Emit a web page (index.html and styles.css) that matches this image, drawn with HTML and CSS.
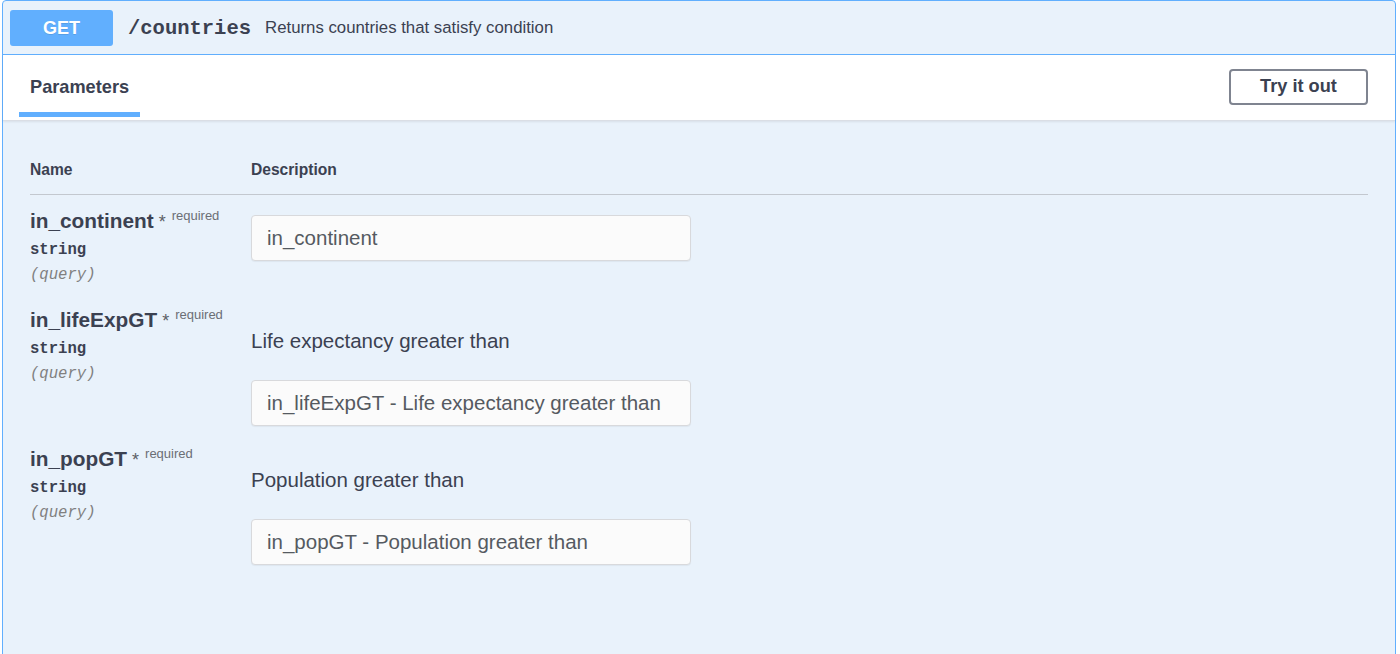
FILE: index.html
```html
<!DOCTYPE html>
<html>
<head>
<meta charset="utf-8">
<link rel="stylesheet" href="styles.css">
</head>
<body>
<div class="opblock">
  <div class="summary">
    <span class="method">GET</span>
    <span class="path">/countries</span>
    <span class="summary-desc">Returns countries that satisfy condition</span>
  </div>
  <div class="section-header">
    <div class="tab">Parameters</div>
    <button class="try-out">Try it out</button>
  </div>
  <div class="params">
    <div class="param-head">
      <div class="col-name">Name</div>
      <div class="col-desc">Description</div>
    </div>
    <div class="param-row">
      <div class="col-name">
        <div class="pname">in_continent<span class="star"> *</span><span class="req">required</span></div>
        <div class="ptype">string</div>
        <div class="pin">(query)</div>
      </div>
      <div class="col-desc">
        <input class="pinput first" placeholder="in_continent" disabled>
      </div>
    </div>
    <div class="param-row">
      <div class="col-name">
        <div class="pname">in_lifeExpGT<span class="star"> *</span><span class="req">required</span></div>
        <div class="ptype">string</div>
        <div class="pin">(query)</div>
      </div>
      <div class="col-desc">
        <p class="markdown">Life expectancy greater than</p>
        <input class="pinput" placeholder="in_lifeExpGT - Life expectancy greater than" disabled>
      </div>
    </div>
    <div class="param-row">
      <div class="col-name">
        <div class="pname">in_popGT<span class="star"> *</span><span class="req">required</span></div>
        <div class="ptype">string</div>
        <div class="pin">(query)</div>
      </div>
      <div class="col-desc">
        <p class="markdown">Population greater than</p>
        <input class="pinput" placeholder="in_popGT - Population greater than" disabled>
      </div>
    </div>
  </div>
</div>
</body>
</html>
```
FILE: styles.css
```css
* { box-sizing: border-box; }
html, body {
  margin: 0;
  padding: 0;
  background: #ffffff;
  font-family: "Liberation Sans", Arial, sans-serif;
  color: #3b4151;
  overflow: hidden;
}
.opblock {
  margin: 0 4px 0 2px;
  border: 1px solid #61affe;
  border-radius: 4px 4px 0 0;
  background: #e9f2fb;
  min-height: 720px;
}
.summary {
  display: flex;
  align-items: center;
  padding: 9px 7px 8px 7px;
  border-bottom: 1px solid #61affe;
}
.method {
  width: 103px;
  height: 36px;
  display: flex;
  align-items: center;
  justify-content: center;
  background: #61affe;
  color: #ffffff;
  font-weight: bold;
  font-size: 18px;
  border-radius: 3px;
  text-shadow: 0 1px 0 rgba(0,0,0,.1);
}
.path {
  margin-left: 15px;
  font-family: "Liberation Mono", "Courier New", monospace;
  font-weight: bold;
  font-size: 20.5px;
  color: #3b4151;
}
.summary-desc {
  margin-left: 14px;
  font-size: 16.8px;
  color: #3b4151;
}
.section-header {
  display: flex;
  align-items: flex-start;
  justify-content: space-between;
  height: 66px;
  padding: 0 27px 0 16px;
  background: #ffffff;
  border-bottom: 1px solid #dadee5;
  box-shadow: 0 1px 2px rgba(0,0,0,.08);
}
.tab {
  padding: 21px 11px 14px 11px;
  line-height: 22px;
  font-size: 18.2px;
  font-weight: bold;
  border-bottom: 5px solid #61affe;
}
.try-out {
  align-self: center;
  margin-top: -2px;
  width: 139px;
  height: 36px;
  background: #ffffff;
  border: 2px solid #7f8490;
  border-radius: 4px;
  font-family: "Liberation Sans", Arial, sans-serif;
  font-weight: bold;
  font-size: 18.2px;
  color: #3b4151;
  padding: 0;
}
.params {
  padding: 37px 27px 0 27px;
}
.param-head {
  display: flex;
  padding-bottom: 12px;
  border-bottom: 1px solid #c3c8cf;
  font-size: 15.6px;
  font-weight: bold;
  line-height: 24px;
}
.col-name {
  width: 221px;
  flex: none;
}
.col-desc {
  flex: 1;
}
.param-row {
  display: flex;
  padding-top: 14px;
  padding-bottom: 7px;
}
.pname {
  font-size: 20.8px;
  font-weight: bold;
  line-height: 24px;
  height: 24px;
  white-space: nowrap;
}
.star {
  font-size: 18px;
  line-height: 0;
  color: #5c5f66;
  font-weight: normal;
}
.req {
  font-size: 13px;
  line-height: 0;
  font-weight: normal;
  color: #6b6e75;
  vertical-align: 8px;
  margin-left: 6px;
}
.ptype {
  margin-top: 7px;
  font-family: "Liberation Mono", "Courier New", monospace;
  font-weight: bold;
  font-size: 15.6px;
  line-height: 20px;
}
.pin {
  margin-top: 5px;
  padding-bottom: 2px;
  font-family: "Liberation Mono", "Courier New", monospace;
  font-style: italic;
  font-size: 15.6px;
  line-height: 20px;
  color: #808080;
}
.markdown {
  margin: 21px 0 0 0;
  font-size: 20.5px;
  line-height: 23px;
}
.pinput {
  display: block;
  width: 440px;
  height: 46px;
  margin-top: 28px;
  padding: 0 15px;
  border: 1px solid #d8d9dc;
  border-radius: 4px;
  background: #fbfbfb;
  font-family: "Liberation Sans", Arial, sans-serif;
  font-size: 20.5px;
  color: #555a61;
  box-shadow: 0 1px 1px rgba(0,0,0,.05);
}
.pinput.first { margin-top: 6px; }
.pinput::placeholder { color: #555a61; opacity: 1; }
```
